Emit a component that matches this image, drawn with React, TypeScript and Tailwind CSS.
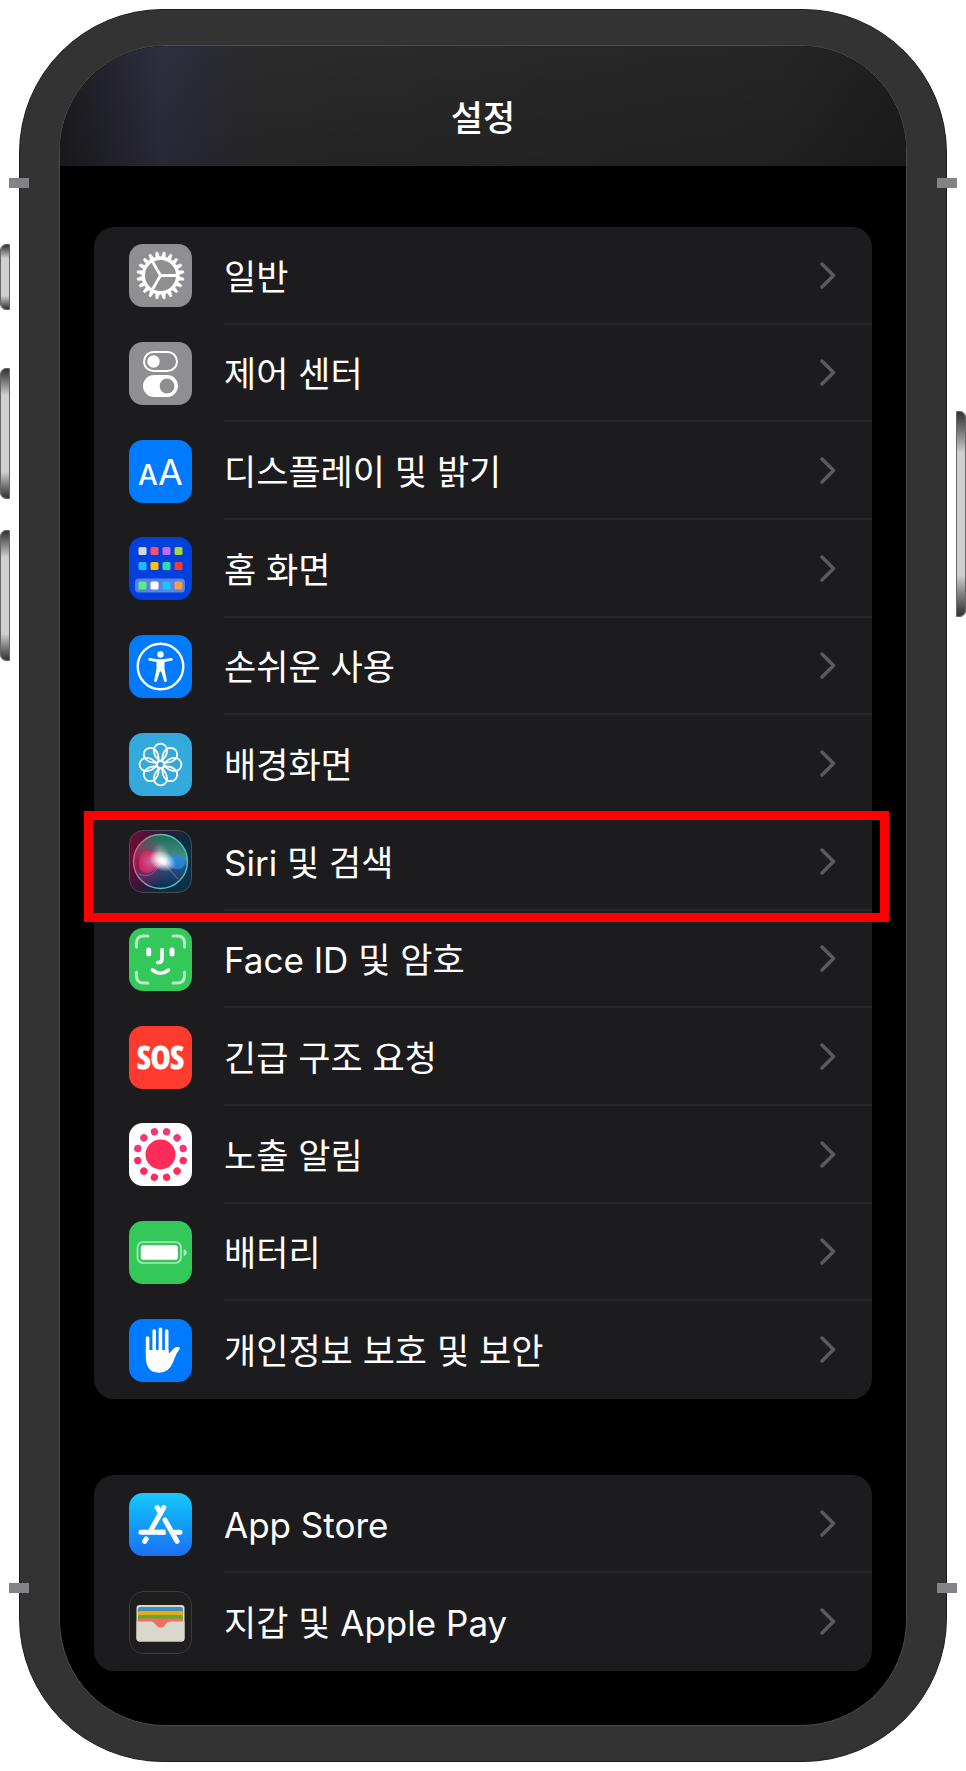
import * as React from "react";

const GearIcon = () => (
  <svg viewBox="0 0 63 63" className="size-full" fill="none" stroke="#fff">
    {Array.from({ length: 20 }, (_, i) => (
      <path
        key={i}
        d="M29.400 14 L30.500 8 H32.500 L33.600 14 Z"
        fill="#fff"
        strokeWidth="0.600"
        strokeLinejoin="round"
        transform={`rotate(${i * 18 + 9} 31.5 31.5)`}
      />
    ))}
    <circle cx="31.500" cy="31.500" r="17.200" strokeWidth="3.400" />
    {[0, 120, 240].map((deg) => (
      <path key={deg} d="M31.500 31.500 H48" strokeWidth="2.800" transform={`rotate(${deg} 31.5 31.5)`} />
    ))}
  </svg>
);

const ControlCenterIcon = () => (
  <svg viewBox="0 0 63 63" className="size-full">
    <rect x="15" y="10" width="33" height="19" rx="9.5" fill="none" stroke="#fff" strokeWidth="2" />
    <circle cx="24.5" cy="19.5" r="6.2" fill="#fff" />
    <rect x="14" y="33" width="35" height="22" rx="11" fill="#fff" />
    <circle cx="38" cy="44" r="7.4" fill="#8e8e93" />
  </svg>
);

const DisplayIcon = () => (
  <svg viewBox="0 0 63 63" className="size-full" fill="#fff" fontFamily="Inter, sans-serif" textAnchor="middle">
    <text x="19" y="45" fontSize="28" fontWeight="500">A</text>
    <text x="41.500" y="45" fontSize="36" fontWeight="400">A</text>
  </svg>
);

const HOME_DOTS = [
  ["#d8d8dc", "#ff4f68", "#bf6bff", "#a8d63a"],
  ["#1fbcff", "#ffc20a", "#34dba4", "#fc3a30"],
  ["#55f27c", "#ffffff", "#17c9fb", "#ff9b45"],
];

const HomeScreenIcon = () => (
  <svg viewBox="0 0 63 63" className="size-full">
    <rect x="6" y="41.500" width="50" height="14" rx="4" fill="#fff" opacity="0.35" />
    {HOME_DOTS.map((row, r) =>
      row.map((color, c) => (
        <rect key={`${r}-${c}`} x={9.5 + c * 12} y={[10, 25, 44.5][r]} width="8" height="8" rx="1.600" fill={color} />
      ))
    )}
  </svg>
);

const AccessibilityIcon = () => (
  <svg viewBox="0 0 63 63" className="size-full">
    <circle cx="31.500" cy="31.500" r="22.800" fill="none" stroke="#fff" strokeWidth="2.400" />
    <circle cx="31.500" cy="19.500" r="3.200" fill="#fff" />
    <path
      d="M20.5 23 L29 24.200 H34 L42.500 23 Q43.700 23 43.700 24.300 Q43.700 25.400 42.500 25.700 L35.500 27 V34 L37.800 45 Q38 46.600 36.800 46.900 Q35.500 47 35 45.700 L32.200 36.500 H30.800 L28 45.700 Q27.500 47 26.200 46.900 Q25 46.600 25.200 45 L27.500 34 V27 L20.500 25.700 Q19.300 25.400 19.300 24.300 Q19.300 23 20.500 23 Z"
      fill="#fff"
    />
  </svg>
);

const WallpaperIcon = () => (
  <svg viewBox="0 0 63 63" className="size-full" fill="none" stroke="#fff" strokeWidth="1.800">
    {Array.from({ length: 8 }, (_, i) => (
      <path
        key={i}
        d="M31.500 28 C27.500 25.500 24.900 21.500 24.900 17.200 A6.600 6.600 0 0 1 38.100 17.200 C38.100 21.500 35.500 25.500 31.500 28 Z"
        transform={`rotate(${i * 45} 31.5 31.5)`}
      />
    ))}
    <circle cx="31.500" cy="31.500" r="3.600" />
  </svg>
);

const SiriIcon = () => (
  <svg viewBox="0 0 63 63" className="size-full">
    <defs>
      <linearGradient id="siriBg" x1="0" y1="0.3" x2="1" y2="0.7">
        <stop offset="0" stopColor="#6d0c34" />
        <stop offset="0.4" stopColor="#2b1838" />
        <stop offset="0.7" stopColor="#0d2c3c" />
        <stop offset="1" stopColor="#0d3049" />
      </linearGradient>
      <linearGradient id="siriGreen" x1="0" y1="0" x2="0" y2="1">
        <stop offset="0" stopColor="#127a5c" />
        <stop offset="0.45" stopColor="#5c9f96" />
        <stop offset="0.6" stopColor="#285c86" />
        <stop offset="1" stopColor="#11275c" />
      </linearGradient>
      <linearGradient id="siriRing" x1="0" y1="0.4" x2="1" y2="0.6">
        <stop offset="0" stopColor="#f0527f" />
        <stop offset="0.5" stopColor="#5cc7a4" />
        <stop offset="1" stopColor="#39c5c5" />
      </linearGradient>
      <radialGradient id="siriRed" cx="0.1" cy="0.5" r="0.55">
        <stop offset="0" stopColor="#a3124b" />
        <stop offset="1" stopColor="#a3124b" stopOpacity="0" />
      </radialGradient>
      <radialGradient id="siriPink">
        <stop offset="0" stopColor="#d66ba4" />
        <stop offset="1" stopColor="#e12463" />
      </radialGradient>
      <radialGradient id="siriGlow">
        <stop offset="0" stopColor="#fff" />
        <stop offset="0.25" stopColor="#fff" stopOpacity="0.9" />
        <stop offset="1" stopColor="#fff" stopOpacity="0" />
      </radialGradient>
    </defs>
    <rect width="63" height="63" fill="url(#siriBg)" />
    <circle cx="31.500" cy="31.500" r="27" fill="url(#siriGreen)" opacity="0.850" />
    <circle cx="31.500" cy="31.500" r="27" fill="url(#siriRed)" />
    <path d="M10 32 C10 18 24 16 33 31 C28 43 12 48 10 36 Z" fill="url(#siriPink)" opacity="0.800" />
    <path d="M33 31 C40 22 56 23 56 33 C54 42 44 41 33 31 Z" fill="#2587dc" opacity="0.850" />
    <path d="M33 31 L49 49" stroke="#b56db6" strokeWidth="1.500" opacity="0.500" />
    <path d="M10 44 C24 50 30 36 33 31" stroke="#6fc6e8" strokeWidth="1" fill="none" opacity="0.500" />
    <ellipse cx="33.500" cy="31" rx="14" ry="10" fill="url(#siriGlow)" transform="rotate(24 33.5 31)" />
    <ellipse cx="31" cy="26" rx="9" ry="13" fill="url(#siriGlow)" opacity="0.400" />
    <circle cx="31.500" cy="31.500" r="27" fill="none" stroke="url(#siriRing)" strokeWidth="1.400" />
    <rect x="0.500" y="0.500" width="62" height="62" rx="13.500" fill="none" stroke="#4b4b55" strokeWidth="1" />
  </svg>
);

const FaceIdIcon = () => (
  <svg viewBox="0 0 63 63" className="size-full" fill="none" stroke="#fff" strokeLinecap="round">
    <path
      d="M7.500 19 V15 Q7.500 8 14.500 8 H19 M44 8 H48.500 Q55.500 8 55.500 15 V19 M55.500 44 V48 Q55.500 55 48.500 55 H44 M19 55 H14.500 Q7.500 55 7.500 48 V44"
      strokeWidth="3"
      opacity="0.650"
    />
    <path d="M19.700 22 V26 M43 22 V26" strokeWidth="5" />
    <path d="M33 21.500 V31 Q33 34.500 29.500 34.500 H28.500" strokeWidth="3.600" />
    <path d="M23.500 42 Q31.500 48.500 39.500 42" strokeWidth="3.600" />
  </svg>
);

const SosIcon = () => (
  <svg viewBox="0 0 63 63" className="size-full">
    <text
      x="31.500"
      y="43"
      fontSize="33"
      fontWeight="700"
      fontFamily="'Liberation Sans Narrow', 'Open Sans Condensed', 'Noto Sans', sans-serif"
      textAnchor="middle"
      fill="#fff"
      stroke="#fff"
      strokeWidth="1"
    >
      SOS
    </text>
  </svg>
);

const ExposureIcon = () => (
  <svg viewBox="0 0 63 63" className="size-full" fill="#fd2c59">
    <circle cx="31.500" cy="31.500" r="15" />
    {Array.from({ length: 12 }, (_, i) => (
      <circle
        key={i}
        cx="31.500"
        cy="8"
        r="3.700"
        fill={i < 3 || i > 8 ? "#ef3a78" : "#fd2c59"}
        transform={`rotate(${i * 30 + 15} 31.5 31.5)`}
      />
    ))}
  </svg>
);

const BatteryIcon = () => (
  <svg viewBox="0 0 63 63" className="size-full" fill="#fff">
    <rect x="8.500" y="21" width="43.500" height="21" rx="5.500" fill="none" stroke="#fff" strokeWidth="1.700" opacity="0.600" />
    <rect x="11.800" y="24.300" width="37" height="14.500" rx="2.600" />
    <path d="M54.600 28 Q57.600 29 57.600 31.500 Q57.600 34 54.600 35 Z" opacity="0.650" />
  </svg>
);

const HandIcon = () => (
  <svg viewBox="0 0 63 63" className="size-full" fill="#fff">
    <path
      d="M18.600 19 V34 M25.200 12 V34 M31.400 10.300 V34 M37.700 12 V34"
      fill="none"
      stroke="#fff"
      strokeWidth="3.600"
      strokeLinecap="round"
    />
    <path d="M16.800 31 H39.500 V33.500 Q40 35 41 33.500 L45 29.300 Q47.500 27.500 50.300 28.200 Q51.400 28.800 50.300 30.400 Q47.500 34 45.500 39.500 Q42.500 48 38.500 51 Q35 53.700 30 53.700 Q22.500 53.700 19.300 48.500 Q16.800 44.500 16.800 38 Z" />
  </svg>
);

const AppStoreIcon = () => (
  <svg viewBox="0 0 63 63" className="size-full" fill="none" stroke="#fff" strokeWidth="5" strokeLinecap="round">
    <path d="M28.200 14.500 L31.500 20" />
    <path d="M34.800 14.500 L22 37" />
    <path d="M12 39.200 H34" />
    <path d="M17.200 46 L15.700 48.300" />
    <path d="M36 27 L48 48.300" />
    <path d="M46 39.200 H51" />
    <path d="M28 39.200 L36.500 39.200" strokeLinecap="butt" />
  </svg>
);

const WalletIcon = () => (
  <svg viewBox="0 0 63 63" className="size-full">
    <defs>
      <clipPath id="walletCards">
        <rect x="9" y="16" width="45" height="32" rx="2.500" />
      </clipPath>
    </defs>
    <rect x="0.500" y="0.500" width="62" height="62" rx="13.500" fill="#1e1e1f" stroke="#3b3b3e" strokeWidth="1" />
    <rect x="7.500" y="14" width="48" height="36.500" rx="3" fill="#dad7cc" />
    <g clipPath="url(#walletCards)">
      <rect x="9" y="16" width="45" height="8" fill="#3b8fb8" />
      <rect x="9" y="20" width="45" height="8" rx="1.500" fill="#e5ac14" />
      <rect x="9" y="24" width="45" height="8" rx="1.500" fill="#5fab2c" />
      <rect x="9" y="27.500" width="45" height="12" rx="1.500" fill="#ef6f60" />
    </g>
    <path
      d="M7.500 30.500 H22 Q25 30.500 26.500 33.300 Q28.500 36.700 31.500 36.700 Q34.500 36.700 36.500 33.300 Q38 30.500 41 30.500 H55.500 V47.500 Q55.500 50.500 52.500 50.500 H10.500 Q7.500 50.500 7.500 47.500 Z"
      fill="#dad7cc"
    />
  </svg>
);

type Item = {
  label: string;
  icon: React.ReactNode;
  bg: string;
  marked?: boolean;
};

const SYSTEM_ITEMS: Item[] = [
  { label: "일반", icon: <GearIcon />, bg: "bg-[#8e8e93]" },
  { label: "제어 센터", icon: <ControlCenterIcon />, bg: "bg-[#8e8e93]" },
  { label: "디스플레이 및 밝기", icon: <DisplayIcon />, bg: "bg-[#007aff]" },
  { label: "홈 화면", icon: <HomeScreenIcon />, bg: "bg-[#0040dd]" },
  { label: "손쉬운 사용", icon: <AccessibilityIcon />, bg: "bg-[#007aff]" },
  { label: "배경화면", icon: <WallpaperIcon />, bg: "bg-[#34aadc]" },
  { label: "Siri 및 검색", icon: <SiriIcon />, bg: "bg-[#1c1c1e]", marked: true },
  { label: "Face ID 및 암호", icon: <FaceIdIcon />, bg: "bg-[#34c759]" },
  { label: "긴급 구조 요청", icon: <SosIcon />, bg: "bg-[#ff3b30]" },
  { label: "노출 알림", icon: <ExposureIcon />, bg: "bg-white" },
  { label: "배터리", icon: <BatteryIcon />, bg: "bg-[#34c759]" },
  { label: "개인정보 보호 및 보안", icon: <HandIcon />, bg: "bg-[#007aff]" },
];

const STORE_ITEMS: Item[] = [
  { label: "App Store", icon: <AppStoreIcon />, bg: "bg-linear-to-b from-[#1ac8fc] to-[#1d6ff2]" },
  { label: "지갑 및 Apple Pay", icon: <WalletIcon />, bg: "bg-[#1e1e1f]" },
];

const SettingsRow = ({ item, last }: { item: Item; last: boolean }) => (
  <li className="relative">
    <a href="#" className="flex h-full items-center gap-8 pl-[35px]">
      <span className={`size-[63px] shrink-0 overflow-hidden rounded-[14px] ${item.bg}`}>{item.icon}</span>
      <span
        className={`flex flex-1 items-center justify-between self-stretch border-b-2 pr-9 ${
          last ? "border-transparent" : "border-[#27272a]"
        }`}
      >
        <span className="pt-1 text-[35px] leading-[48px]">{item.label}</span>
        <svg viewBox="0 0 16 28" className="h-7 w-4 shrink-0" fill="none" stroke="#5b5b5f" strokeWidth="3.500" strokeLinecap="round" strokeLinejoin="round">
          <path d="M2 3 L13.500 14.500 L2 26" />
        </svg>
      </span>
    </a>
    {/* 강조 표시 */}
    {item.marked && (
      <span className="pointer-events-none absolute -top-[2px] -right-[17px] -bottom-[11px] -left-[10px] z-10 border-[9px] border-[#ff0000]" />
    )}
  </li>
);

const SettingsGroup = ({ items, className }: { items: Item[]; className: string }) => (
  <ul className={`grid auto-rows-fr rounded-[20px] bg-[#1c1c1e] ${className}`}>
    {items.map((item, index) => (
      <SettingsRow key={item.label} item={item} last={index === items.length - 1} />
    ))}
  </ul>
);

const SideButton = ({ className }: { className: string }) => (
  <div className={`flex w-[10px] flex-col overflow-hidden border border-[#666] bg-[#cfcfd1] ${className}`}>
    <div className="h-1/5 bg-linear-to-b from-[#333] to-[#cfcfd1]" />
    <div className="flex-1" />
    <div className="h-1/5 bg-linear-to-t from-[#333] to-[#cfcfd1]" />
  </div>
);

const App = () => {
  return (
    <div
      className="flex min-h-screen items-start bg-white text-white"
      style={{ fontFamily: "Inter, 'Noto Sans CJK KR', sans-serif" }}
    >
      {/* 왼쪽 버튼 */}
      <div className="flex w-[19px] shrink-0 flex-col items-start pt-[244px]">
        <SideButton className="h-[66px] rounded-l-[6px]" />
        <SideButton className="mt-[58px] h-[131px] rounded-l-[6px]" />
        <SideButton className="mt-[31px] h-[131px] rounded-l-[6px]" />
      </div>

      {/* 휴대폰 프레임 */}
      <div className="relative mt-[9px] flex-1 rounded-[144px] border border-[#1c1c1c] bg-[#333] px-[39px] py-[35px]">
        <span className="absolute top-[168px] -left-[11px] h-[10px] w-5 bg-[#828287]" />
        <span className="absolute top-[168px] -right-[11px] h-[10px] w-5 bg-[#828287]" />
        <span className="absolute bottom-[168px] -left-[11px] h-[10px] w-5 bg-[#828287]" />
        <span className="absolute -right-[11px] bottom-[168px] h-[10px] w-5 bg-[#828287]" />

        <div className="overflow-hidden rounded-[106px] border border-[#4a4a4c] bg-black">
          {/* 상단 헤더 */}
          <header className="bg-[linear-gradient(to_right,#1c1c1f,#2f2e3f_12%,#2b2b33_18%,#2b2b2b_24%,#282828_60%,#262626_85%,#1e1e1e)]">
            <div className="flex h-[120px] items-center justify-center bg-linear-to-b from-transparent to-black/15 pt-6">
              <h1 className="text-[35px] leading-[48px] font-medium">설정</h1>
            </div>
          </header>

          <main className="px-[34px] pt-[61px] pb-[54px]">
            <SettingsGroup items={SYSTEM_ITEMS} className="min-h-[1172px]" />
            <SettingsGroup items={STORE_ITEMS} className="mt-[76px] min-h-[196px]" />
          </main>
        </div>
      </div>

      {/* 오른쪽 버튼 */}
      <div className="flex w-[19px] shrink-0 flex-col items-end pt-[411px]">
        <SideButton className="h-[206px] rounded-r-[6px]" />
      </div>
    </div>
  );
};

export default App;
